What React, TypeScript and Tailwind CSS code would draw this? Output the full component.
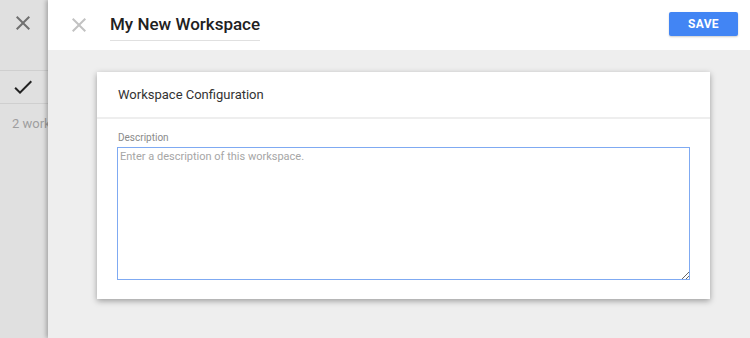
import React from "react";

const XIcon = ({ className }: { className?: string }) => (
  <svg viewBox="0 0 24 24" className={className} fill="currentColor">
    <path d="M19 6.41L17.59 5 12 10.59 6.41 5 5 6.41 10.59 12 5 17.59 6.41 19 12 13.41 17.59 19 19 17.59 13.41 12z" />
  </svg>
);

const Check = ({ className }: { className?: string }) => (
  <svg viewBox="0 0 24 24" className={className} fill="currentColor">
    <path d="M9 16.17L4.83 12l-1.42 1.41L9 19 21 7l-1.41-1.41z" />
  </svg>
);

export default function App() {
  return (
    <div
      className="flex h-[338px] w-[750px] overflow-hidden bg-[#eeeeee]"
      style={{ fontFamily: "Roboto, 'Liberation Sans', sans-serif" }}
    >
      {/* background panel */}
      <div className="w-[48px] shrink-0 overflow-hidden bg-[#e0e0e0]">
        <div className="w-[200px]">
          <div className="h-[71px] border-b border-[#cfcfcf] pt-[11px] pl-[11px]">
            <XIcon className="h-[24px] w-[24px] text-[#707070]" />
          </div>
          <div className="flex h-[33px] items-center border-b border-[#cfcfcf] pl-[11px]">
            <Check className="h-[24px] w-[24px] text-[#222]" />
          </div>
          <div className="pt-[10px] pl-[12px] text-[13px] text-[#9e9e9e]">2 works</div>
        </div>
      </div>

      {/* overlay panel */}
      <div className="relative flex flex-1 flex-col shadow-[-2px_0_4px_rgba(0,0,0,0.25)]">
        <div className="flex h-[50px] shrink-0 items-center bg-white">
          <XIcon className="ml-[19px] h-[24px] w-[24px] text-[#c2c2c2]" />
          <div className="ml-[19px] flex h-[36px] flex-col">
            <div className="pt-[2px] text-[17px] font-medium leading-[30px] text-[#212121]">My New Workspace</div>
            <div className="mt-[1px] h-[1px] bg-[#e0e0e0]" />
          </div>
          <div className="flex-1" />
          <button className="mr-[12px] mb-[2px] h-[24px] w-[69px] rounded-[2px] bg-[#4285f4] text-[12px] font-bold tracking-[0.3px] text-white shadow-[0_1px_2px_rgba(0,0,0,0.2)]">
            SAVE
          </button>
        </div>
        <div className="flex-1 pt-[22px] pl-[49px] pr-[40px]">
          <div className="h-[227px] bg-white shadow-[0_2px_6px_rgba(0,0,0,0.35)]">
            <div className="flex h-[47px] items-center border-b-2 border-[#eeeeee] pl-[21px] text-[13px] text-[#333]">
              Workspace Configuration
            </div>
            <div className="px-[20px] pt-[12px]">
              <div className="pl-[1px] text-[10px] leading-[14px] text-[#8a8a8a]">Description</div>
              <textarea
                className="mt-[2px] block h-[133px] w-full resize-y appearance-none rounded-none border-0 bg-white px-[3px] pt-[2px] text-[11px] leading-[16px] text-[#333] outline-none ring-1 ring-inset ring-[#7faaf2] placeholder:text-[#a6a6a6]"
                placeholder="Enter a description of this workspace."
              />
            </div>
          </div>
        </div>
      </div>
    </div>
  );
}
